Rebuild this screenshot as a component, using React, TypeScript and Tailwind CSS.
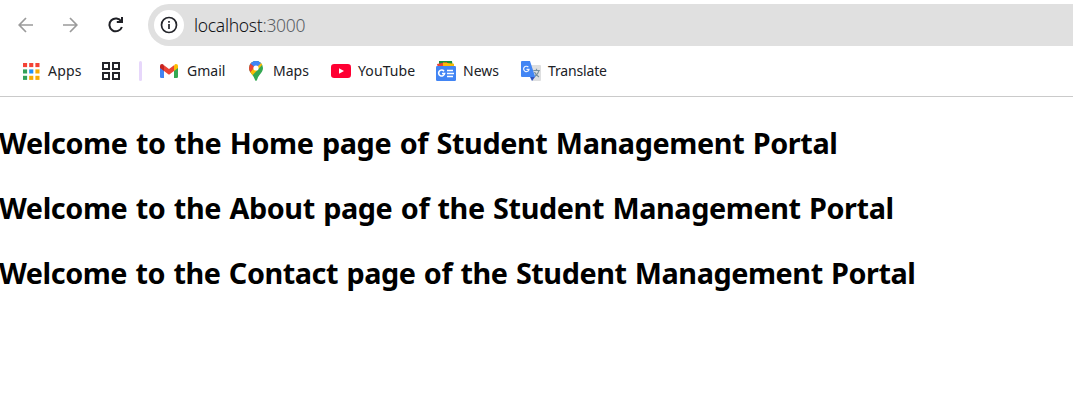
import React from "react";

const appDots = ["#f44336", "#f44336", "#f44336", "#34a15a", "#2491f5", "#f9ab00", "#34a15a", "#f9ab00", "#f9ab00"];

function AppsIcon() {
  return (
    <svg className="h-[17px] w-[17px]" viewBox="0 0 17 17">
      {appDots.map((c, i) => (
        <rect key={i} x={(i % 3) * 6.2} y={Math.floor(i / 3) * 6.4} width="4.1" height="4.1" fill={c} />
      ))}
    </svg>
  );
}

function TabGroupIcon() {
  return (
    <svg className="h-[18px] w-[18px]" viewBox="0 0 18 18" fill="none" stroke="#24252b" strokeWidth="2">
      <path d="M1 1h6v6H1zM11 1h6v6h-6zM1 11h6v6H1zM11 11h6v6h-6z" />
    </svg>
  );
}

function GmailIcon() {
  return (
    <svg className="h-[14px] w-[18px]" viewBox="0 0 18 14">
      <path d="M0 3v9.7Q0 14 1.3 14H4V6z" fill="#4285f4" />
      <path d="M14 6v8h2.7q1.3 0 1.3-1.3V3z" fill="#34a853" />
      <path d="M14 1.4V7l4-3V2q0-2-2-2-1 0-2 1.4" fill="#fbbc04" />
      <path d="M4 7V1.3l5 3.8 5-3.8V7l-5 3.8z" fill="#ea4335" />
      <path d="M0 2v2l4 3V1.3Q3 0 2 0 0 0 0 2" fill="#c5221f" />
    </svg>
  );
}

function MapsIcon() {
  return (
    <svg className="h-5 w-[14px]" viewBox="0 0 14 20">
      <defs>
        <clipPath id="pin">
          <path d="M7 0a7 7 0 0 0-7 7c0 4.5 4.2 6.2 5.7 11.2Q6.3 20 7 20t1.3-1.8C9.8 13.2 14 11.5 14 7a7 7 0 0 0-7-7" />
        </clipPath>
      </defs>
      <g clipPath="url(#pin)">
        <path d="M0 0h14v20H0z" fill="#34a853" />
        <path d="M0 12.3 7 4l7-6v5L2.6 15.2z" fill="#fbbc04" />
        <path d="M0 0h2l5 4.5-6.3 7.4L-1 10z" fill="#ea4335" />
        <path d="M1.5 2.5 5 5.5 13 0H1z" fill="#1a73e8" />
        <path d="m7 7 5.6-5.4L9 0H5L1.6 2.5z" fill="#4285f4" />
      </g>
      <circle cx="7" cy="7" r="2.6" fill="#fff" />
    </svg>
  );
}

function YouTubeIcon() {
  return (
    <svg className="h-[14px] w-5" viewBox="0 0 20 14">
      <rect width="20" height="14" rx="3.2" fill="#ff0033" />
      <path d="m8 4.2 5 2.8-5 2.8z" fill="#fff" />
    </svg>
  );
}

function NewsIcon() {
  return (
    <svg className="h-5 w-5" viewBox="0 0 20 20">
      <path d="M3 0h13l1 7H3z" fill="#188f3e" />
      <path d="m1 3 10-2 2 6H2z" fill="#ea4335" />
      <path d="m7 1.5 11 1.3V7H7z" fill="#fbbc04" />
      <rect y="5" width="20" height="15" rx="1.2" fill="#4285f4" />
      <path d="M8 10.2a3 3 0 1 0 .6 2.3H6" fill="none" stroke="#fff" strokeWidth="1.6" />
      <path d="M11 9.5h6M11 12.5h7M11 15.5h6" stroke="#fff" strokeWidth="1.5" />
    </svg>
  );
}

function TranslateIcon() {
  return (
    <svg className="h-5 w-5" viewBox="0 0 20 20">
      <path d="M8 4h11q1 0 1 1v14q0 1-1 1h-8z" fill="#dedfe0" />
      <path d="M12.3 9.5h6.5M15.5 7.8v1.7M18 9.5c-.5 3-3 5-4.5 6.3M13.5 11c.8 2 2.8 4 4.5 5" fill="none" stroke="#78909c" strokeWidth="1.2" />
      <path d="M9 16h5l-3 4z" fill="#3153bd" />
      <path d="M1 0h8l5.2 16H1q-1 0-1-1V1q0-1 1-1" fill="#4285f4" />
      <path d="M7.4 6.2A2.7 2.7 0 1 0 8 8.3H5.5" fill="none" stroke="#eef4ff" strokeWidth="1.2" />
    </svg>
  );
}

function Bookmark({ icon, label, className, labelClass }: { icon: React.ReactNode; label: string; className: string; labelClass: string }) {
  return (
    <a className={`flex shrink-0 items-center ${className}`}>
      {icon}
      <span className={`whitespace-nowrap ${labelClass}`}>{label}</span>
    </a>
  );
}

export default function App() {
  return (
    <div className="h-[407px] w-full overflow-hidden bg-white font-['Noto_Sans',sans-serif]">
      <header className="h-[97px] border-b border-[#cacaca]">
        <div className="flex h-[50px] items-center pl-[18px]">
          <svg className="h-4 w-[15px]" viewBox="0 0 15 16" fill="none" stroke="#9b9b9b" strokeWidth="1.7">
            <path d="M15 8H1.2M8 1 1.2 8 8 15" />
          </svg>
          <svg className="ml-[30px] h-4 w-[15px]" viewBox="0 0 15 16" fill="none" stroke="#9b9b9b" strokeWidth="1.7">
            <path d="M0 8h13.8M7 1l6.8 7L7 15" />
          </svg>
          <svg className="ml-[30px] h-4 w-4" viewBox="0 0 16 16" fill="none" stroke="#1e1f25" strokeWidth="2">
            <path d="M13.3 4.5A6.4 6.4 0 1 0 13.9 10M14 0v5H8.8" />
          </svg>
          <div className="ml-6 flex h-[42px] flex-1 items-center rounded-l-full bg-[#e0e0e0] pl-1.5">
            <div className="flex h-[30px] w-[30px] items-center justify-center rounded-full bg-white">
              <svg className="h-[18px] w-[18px]" viewBox="0 0 18 18" fill="none" stroke="#24252b" strokeWidth="1.7">
                <circle cx="9" cy="9" r="7.5" />
                <path d="M9 8v5M9 5v1.8" />
              </svg>
            </div>
            <span className="ml-[10px] text-[17.5px] leading-6 font-light tracking-[-0.3px] text-[#101116]">
              localhost<span className="text-[#5b5f65]">:3000</span>
            </span>
          </div>
        </div>
        <nav className="flex h-[42px] items-center pl-[23px] text-sm text-[#202126]">
          <Bookmark icon={<AppsIcon />} label="Apps" className="w-[79px]" labelClass="ml-2 tracking-[0.2px]" />
          <TabGroupIcon />
          <div className="ml-[19px] h-5 w-[3px] rounded-sm bg-[#e7d7fb]" />
          <Bookmark icon={<GmailIcon />} label="Gmail" className="ml-[18px] w-[89px]" labelClass="ml-[9px]" />
          <Bookmark icon={<MapsIcon />} label="Maps" className="w-[82px]" labelClass="ml-[10px]" />
          <Bookmark icon={<YouTubeIcon />} label="YouTube" className="w-[105px]" labelClass="ml-[7px] tracking-[0.1px]" />
          <Bookmark icon={<NewsIcon />} label="News" className="w-[85px]" labelClass="ml-[7px]" />
          <Bookmark icon={<TranslateIcon />} label="Translate" className="w-[100px]" labelClass="ml-[7px] tracking-[-0.15px]" />
        </nav>
      </header>
      <main className="-ml-px flex flex-col gap-[25px] pt-[26px] text-[28.8px] leading-[40px] font-bold whitespace-nowrap text-black [word-spacing:1.3px]">
        <h1 className="tracking-[-0.38px]">Welcome to the Home page of Student Management Portal</h1>
        <h1 className="tracking-[-0.4px]">Welcome to the About page of the Student Management Portal</h1>
        <h1 className="tracking-[-0.44px]">Welcome to the Contact page of the Student Management Portal</h1>
      </main>
    </div>
  );
}
